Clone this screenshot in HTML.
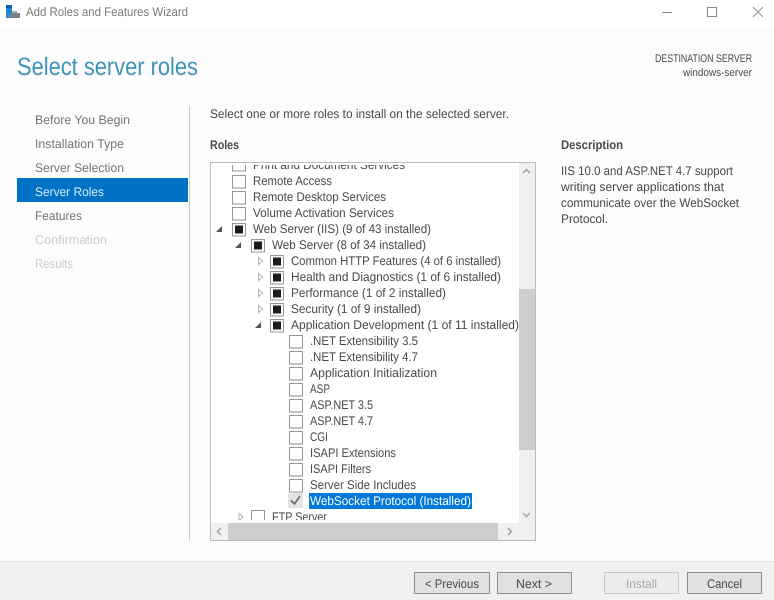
<!DOCTYPE html>
<html><head><meta charset="utf-8"><style>
html,body{margin:0;padding:0;background:#fcfcfc;width:774px;height:600px;overflow:hidden}
svg{display:block;font-family:"Liberation Sans",sans-serif;font-size:12.5px;text-rendering:geometricPrecision}
text{fill:#484848}
</style></head><body>
<svg width="774" height="600" viewBox="0 0 774 600" xmlns="http://www.w3.org/2000/svg">
<defs>
<filter id="b" x="-5%" y="-5%" width="110%" height="110%"><feGaussianBlur stdDeviation="0.35"/></filter>
<clipPath id="list"><rect x="211" y="165" width="308" height="355"/></clipPath>
<symbol id="cb" overflow="visible"><rect x="0.5" y="0.5" width="13" height="12.500" fill="#fff" stroke="#969696"/></symbol>
<symbol id="cf" overflow="visible"><rect x="0.5" y="0.5" width="13" height="12.500" fill="#fff" stroke="#969696"/><rect x="3" y="2.500" width="8" height="8" fill="#1c1c1c"/></symbol>
</defs>
<g filter="url(#b)">
<rect width="774" height="600" fill="#fcfcfc"/>
<rect width="774" height="27" fill="#fff"/>
<!-- app icon -->
<rect x="6" y="5" width="6" height="13" fill="#1e88d4"/>
<rect x="6" y="5" width="6" height="3" fill="#0f5fa8"/>
<rect x="9" y="13" width="11" height="5" fill="#6f8293"/>
<rect x="12" y="11" width="5" height="2" fill="#9fb0bd"/>
<text x="26" y="16" textLength="162" lengthAdjust="spacingAndGlyphs" style="fill:#7a7a7a">Add Roles and Features Wizard</text>
<!-- window controls -->
<path d="M662 12.500H672" stroke="#888" fill="none"/>
<rect x="707.500" y="7.500" width="9" height="9" fill="none" stroke="#888"/>
<path d="M753 7L763 17M763 7L753 17" stroke="#999" fill="none"/>
<!-- header -->
<text x="17" y="75" font-size="25" textLength="181" lengthAdjust="spacingAndGlyphs" style="fill:#3d94ba">Select server roles</text>
<text x="655" y="62" font-size="11" textLength="97" lengthAdjust="spacingAndGlyphs">DESTINATION SERVER</text>
<text x="683" y="76" font-size="11" textLength="69" lengthAdjust="spacingAndGlyphs">windows-server</text>
<!-- nav -->
<rect x="17" y="178" width="171" height="24" fill="#0072c6"/>
<path d="M189.500 106V541" stroke="#cfcfcf"/>
<text x="35" y="124" textLength="95" lengthAdjust="spacingAndGlyphs" style="fill:#747474">Before You Begin</text>
<text x="35" y="148" textLength="89" lengthAdjust="spacingAndGlyphs" style="fill:#747474">Installation Type</text>
<text x="35" y="172" textLength="89" lengthAdjust="spacingAndGlyphs" style="fill:#747474">Server Selection</text>
<text x="35" y="196" textLength="69" lengthAdjust="spacingAndGlyphs" style="fill:#dcebf6">Server Roles</text>
<text x="35" y="220" textLength="47" lengthAdjust="spacingAndGlyphs" style="fill:#747474">Features</text>
<text x="35" y="244" textLength="72" lengthAdjust="spacingAndGlyphs" style="fill:#cccccc">Confirmation</text>
<text x="35" y="268" textLength="38" lengthAdjust="spacingAndGlyphs" style="fill:#cccccc">Results</text>
<!-- main -->
<text x="210" y="118" textLength="299" lengthAdjust="spacingAndGlyphs">Select one or more roles to install on the selected server.</text>
<text x="210" y="149" font-weight="bold" textLength="29" lengthAdjust="spacingAndGlyphs">Roles</text>
<text x="561" y="149" font-weight="bold" textLength="62" lengthAdjust="spacingAndGlyphs">Description</text>
<text x="561" y="175" textLength="172" lengthAdjust="spacingAndGlyphs">IIS 10.0 and ASP.NET 4.7 support</text>
<text x="561" y="191" textLength="163" lengthAdjust="spacingAndGlyphs">writing server applications that</text>
<text x="561" y="207" textLength="178" lengthAdjust="spacingAndGlyphs">communicate over the WebSocket</text>
<text x="561" y="223" textLength="47" lengthAdjust="spacingAndGlyphs">Protocol.</text>
<!-- list box -->
<rect x="210.500" y="162.500" width="325" height="378" fill="#fff" stroke="#bcbcbc"/>
<g clip-path="url(#list)">
<use href="#cb" x="232" y="158"/>
<text x="253" y="169" textLength="152" lengthAdjust="spacingAndGlyphs">Print and Document Services</text>
<use href="#cb" x="232" y="175"/><text x="253" y="185" textLength="79" lengthAdjust="spacingAndGlyphs">Remote Access</text>
<use href="#cb" x="232" y="191"/><text x="253" y="201" textLength="133" lengthAdjust="spacingAndGlyphs">Remote Desktop Services</text>
<use href="#cb" x="232" y="207"/><text x="253" y="217" textLength="141" lengthAdjust="spacingAndGlyphs">Volume Activation Services</text>
<path d="M222 226V232H216Z" fill="#555"/>
<use href="#cf" x="232" y="223"/><text x="253" y="233" textLength="178" lengthAdjust="spacingAndGlyphs">Web Server (IIS) (9 of 43 installed)</text>
<path d="M241 242V248H235Z" fill="#555"/>
<use href="#cf" x="251" y="239"/><text x="272" y="249" textLength="154" lengthAdjust="spacingAndGlyphs">Web Server (8 of 34 installed)</text>
<path d="M258.500 257.500L262.500 261L258.500 264.500Z" fill="#fff" stroke="#b4b4b4"/>
<use href="#cf" x="270" y="255"/><text x="291" y="265" textLength="210" lengthAdjust="spacingAndGlyphs">Common HTTP Features (4 of 6 installed)</text>
<path d="M258.500 273.500L262.500 277L258.500 280.500Z" fill="#fff" stroke="#b4b4b4"/>
<use href="#cf" x="270" y="271"/><text x="291" y="281" textLength="210" lengthAdjust="spacingAndGlyphs">Health and Diagnostics (1 of 6 installed)</text>
<path d="M258.500 289.500L262.500 293L258.500 296.500Z" fill="#fff" stroke="#b4b4b4"/>
<use href="#cf" x="270" y="287"/><text x="291" y="297" textLength="155" lengthAdjust="spacingAndGlyphs">Performance (1 of 2 installed)</text>
<path d="M258.500 305.500L262.500 309L258.500 312.500Z" fill="#fff" stroke="#b4b4b4"/>
<use href="#cf" x="270" y="303"/><text x="291" y="313" textLength="130" lengthAdjust="spacingAndGlyphs">Security (1 of 9 installed)</text>
<path d="M261 322V328H255Z" fill="#555"/>
<use href="#cf" x="270" y="319"/><text x="291" y="329" textLength="228" lengthAdjust="spacingAndGlyphs">Application Development (1 of 11 installed)</text>
<use href="#cb" x="289" y="335"/><text x="310" y="345" textLength="108" lengthAdjust="spacingAndGlyphs">.NET Extensibility 3.5</text>
<use href="#cb" x="289" y="351"/><text x="310" y="361" textLength="108" lengthAdjust="spacingAndGlyphs">.NET Extensibility 4.7</text>
<use href="#cb" x="289" y="367"/><text x="310" y="377" textLength="127" lengthAdjust="spacingAndGlyphs">Application Initialization</text>
<use href="#cb" x="289" y="383"/><text x="310" y="393" textLength="20" lengthAdjust="spacingAndGlyphs">ASP</text>
<use href="#cb" x="289" y="399"/><text x="310" y="409" textLength="63" lengthAdjust="spacingAndGlyphs">ASP.NET 3.5</text>
<use href="#cb" x="289" y="415"/><text x="310" y="425" textLength="63" lengthAdjust="spacingAndGlyphs">ASP.NET 4.7</text>
<use href="#cb" x="289" y="431"/><text x="310" y="441" textLength="18" lengthAdjust="spacingAndGlyphs">CGI</text>
<use href="#cb" x="289" y="447"/><text x="310" y="457" textLength="86" lengthAdjust="spacingAndGlyphs">ISAPI Extensions</text>
<use href="#cb" x="289" y="463"/><text x="310" y="473" textLength="61" lengthAdjust="spacingAndGlyphs">ISAPI Filters</text>
<use href="#cb" x="289" y="479"/><text x="310" y="489" textLength="106" lengthAdjust="spacingAndGlyphs">Server Side Includes</text>
<rect x="288" y="493" width="15" height="15" fill="#e4e4e4"/>
<path d="M291 500.500L294.500 504L300 496" fill="none" stroke="#6a6a6a" stroke-width="1.600"/>
<rect x="309" y="493" width="163" height="16" fill="#0078d7"/>
<text x="310" y="505" textLength="161" lengthAdjust="spacingAndGlyphs" style="fill:#fff">WebSocket Protocol (Installed)</text>
<path d="M239 513.500L243 517L239 520.500Z" fill="#fff" stroke="#b4b4b4"/>
<use href="#cb" x="251" y="510"/><text x="272" y="521" textLength="55" lengthAdjust="spacingAndGlyphs">FTP Server</text>
</g>
<!-- vertical scrollbar -->
<rect x="519" y="163" width="16" height="360" fill="#f0f0f0"/>
<rect x="519" y="289" width="16" height="161" fill="#cdcdcd"/>
<path d="M523 173L526.500 169.500L530 173" fill="none" stroke="#a4a4a4" stroke-width="1.500"/>
<path d="M523 513L526.500 516.500L530 513" fill="none" stroke="#a4a4a4" stroke-width="1.500"/>
<!-- horizontal scrollbar -->
<rect x="211" y="523" width="324" height="17" fill="#f0f0f0"/>
<rect x="228" y="523" width="270" height="17" fill="#cdcdcd"/>
<path d="M221 528L217.500 531.500L221 535" fill="none" stroke="#a4a4a4" stroke-width="1.500"/>
<path d="M508 528L511.500 531.500L508 535" fill="none" stroke="#a4a4a4" stroke-width="1.500"/>
<!-- footer -->
<rect x="0" y="561" width="774" height="39" fill="#f0f0f0"/>
<path d="M0 561.500H774" stroke="#dfdfdf"/>
<rect x="414.500" y="572.500" width="75" height="21" fill="#e1e1e1" stroke="#8f8f8f"/>
<text x="425" y="588" textLength="54" lengthAdjust="spacingAndGlyphs">&lt; Previous</text>
<rect x="497.500" y="572.500" width="74" height="21" fill="#e1e1e1" stroke="#8f8f8f"/>
<text x="516" y="588" textLength="36" lengthAdjust="spacingAndGlyphs">Next &gt;</text>
<rect x="604.500" y="572.500" width="74" height="21" fill="#ececec" stroke="#c8c8c8"/>
<text x="626" y="588" textLength="31" lengthAdjust="spacingAndGlyphs" style="fill:#a8a8a8">Install</text>
<rect x="687.500" y="572.500" width="74" height="21" fill="#e1e1e1" stroke="#8f8f8f"/>
<text x="707" y="588" textLength="35" lengthAdjust="spacingAndGlyphs">Cancel</text>
</g>
</svg>
</body></html>
